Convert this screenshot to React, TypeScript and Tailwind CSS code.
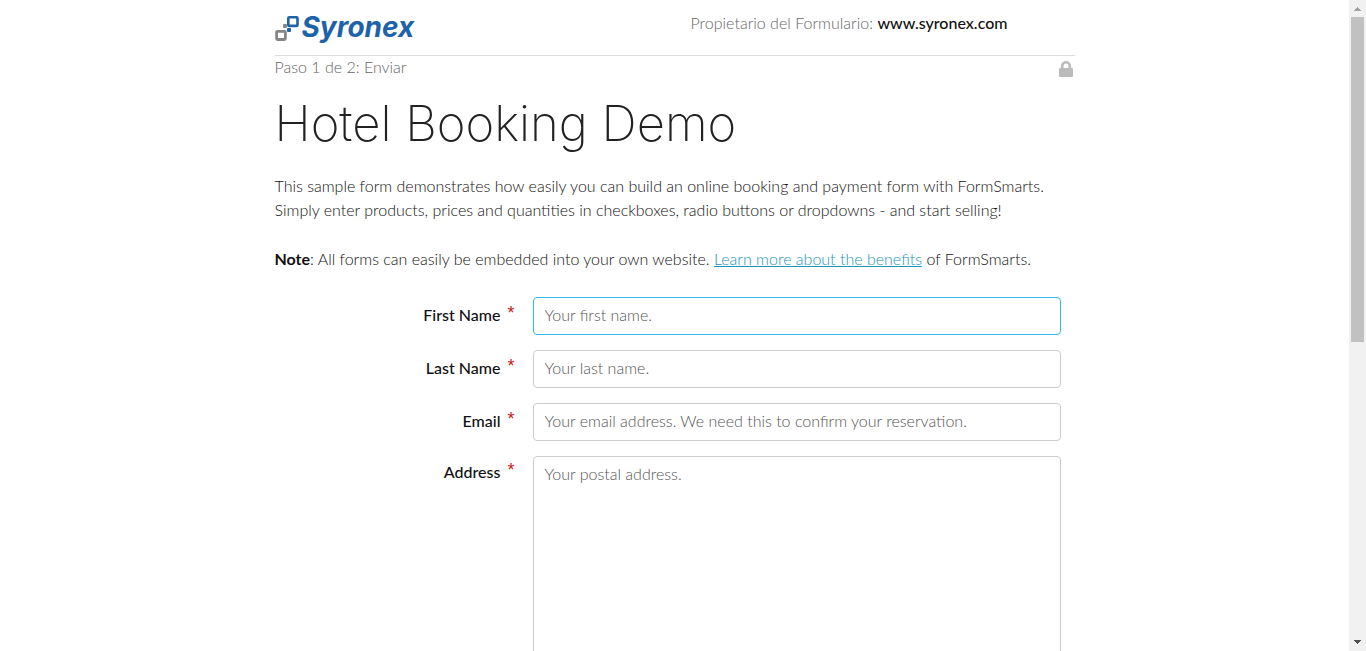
const paragraphs = 'leading-6 text-[#111]';

type FieldProps = { id: string; label: string; hint: string; type?: string; multiline?: boolean; autoFocus?: boolean };

const control =
  'block w-full rounded border border-[#ccc] bg-white px-[11px] leading-6 text-[#222] outline-none placeholder:text-[#555] placeholder:opacity-100 focus:border-[#31bbe6]';

function Field({ id, label, hint, type = 'text', multiline, autoFocus }: FieldProps) {
  return (
    <div className="grid grid-cols-[240px_1fr] gap-[18px]">
      <label
        htmlFor={id}
        className={`flex justify-end gap-[7px] leading-6 font-medium text-[#111] ${multiline ? 'pt-1' : 'pt-[6px]'}`}
      >
        {label}
        <span className="font-['Liberation_Sans',sans-serif] text-lg leading-5 font-normal text-[#c8190f]">*</span>
      </label>
      {multiline ? (
        <textarea id={id} rows={12} placeholder={hint} className={`${control} resize-none py-[5px]`} />
      ) : (
        <input id={id} type={type} placeholder={hint} autoFocus={autoFocus} className={`${control} h-[38px] pb-1 caret-transparent`} />
      )}
    </div>
  );
}

function Logo() {
  return (
    <a href="#syronex" aria-label="Syronex" className="flex items-center gap-[2px] text-[#1d63a8]">
      <svg width="25" height="28" viewBox="0 0 25 28" fill="none" aria-hidden="true">
        <rect x="13.3" y="4.3" width="9.2" height="8.6" rx="1" stroke="#1d63a8" strokeWidth="2.6" />
        <rect x="1.6" y="18.3" width="8.8" height="8.2" rx="1" stroke="#868686" strokeWidth="2.8" />
        <rect x="8" y="11" width="4" height="4" rx="1" fill="#868686" />
        <rect x="12" y="15" width="4" height="4" rx="1" fill="#1d63a8" />
      </svg>
      <span className="font-['Inter',sans-serif] text-[28px] leading-8 font-bold italic">Syronex</span>
    </a>
  );
}

function ScrollRail() {
  return (
    <div aria-hidden="true" className="flex w-[17px] shrink-0 flex-col items-center bg-[#f1f1f1]">
      <svg className="h-[17px] w-[17px] shrink-0" viewBox="0 0 17 17" shapeRendering="crispEdges">
        <path d="M8 7h1v1h1v1h1v1h1v1H5v-1h1V9h1V8h1z" fill="#a3a3a3" />
      </svg>
      <div className="flex min-h-0 w-[13px] flex-1 flex-col">
        <div className="h-[52.7%] bg-[#c1c1c1]" />
      </div>
      <svg className="h-[17px] w-[17px] shrink-0" viewBox="0 0 17 17" shapeRendering="crispEdges">
        <path d="M5 6h7v1h-1v1h-1v1H9v1H8V9H7V8H6V7H5z" fill="#505050" />
      </svg>
    </div>
  );
}

export default function App() {
  return (
    <div className="flex h-screen bg-white font-['Lato',sans-serif] text-base font-light">
      <main className="min-w-0 flex-1 overflow-hidden">
        <div className="mx-auto max-w-[800px]">
          <header className="flex h-14 items-start border-b border-[#ddd] pt-[11px]">
            <div className="w-[52%]">
              <Logo />
            </div>
            <p className="leading-6 text-[#666]">
              Propietario del Formulario: <strong className="font-medium text-[#111]">www.syronex.com</strong>
            </p>
          </header>
          <div className="flex h-[22px] items-center justify-between pr-[2px] text-[#666]">
            <span>Paso 1 de 2: Enviar</span>
            <svg className="mt-1 h-4 w-[14px]" viewBox="0 0 14 16" role="img" aria-label="Conexión segura">
              <path d="M3.2 8V4.9a3.8 3.6 0 0 1 7.6 0V8" fill="none" stroke="#bbb" strokeWidth="2.6" />
              <rect y="7" width="14" height="9" rx="1.3" fill="#bbb" />
            </svg>
          </div>
          <h1 className="mt-4 font-['Inter',sans-serif] text-[49px] leading-[60px] font-extralight text-[#222]">
            Hotel Booking Demo
          </h1>
          <div className={`mt-5 ${paragraphs}`}>
            <p>
              This sample form demonstrates how easily you can build an online booking and payment form with FormSmarts.
              <br />
              Simply enter products, prices and quantities in checkboxes, radio buttons or dropdowns - and start selling!
            </p>
            <p className="mt-[25px]">
              <strong className="font-bold">Note</strong>: All forms can easily be embedded into your own website.{' '}
              <a href="#benefits" className="text-[#1a96bd] underline">
                Learn more about the benefits
              </a>{' '}
              of FormSmarts.
            </p>
          </div>
          <form className="mt-[26px] flex flex-col gap-[15px] pr-[14px]">
            <Field id="first-name" label="First Name" hint="Your first name." autoFocus />
            <Field id="last-name" label="Last Name" hint="Your last name." />
            <Field id="email" type="email" label="Email" hint="Your email address. We need this to confirm your reservation." />
            <Field id="address" label="Address" hint="Your postal address." multiline />
          </form>
        </div>
      </main>
      <ScrollRail />
    </div>
  );
}
